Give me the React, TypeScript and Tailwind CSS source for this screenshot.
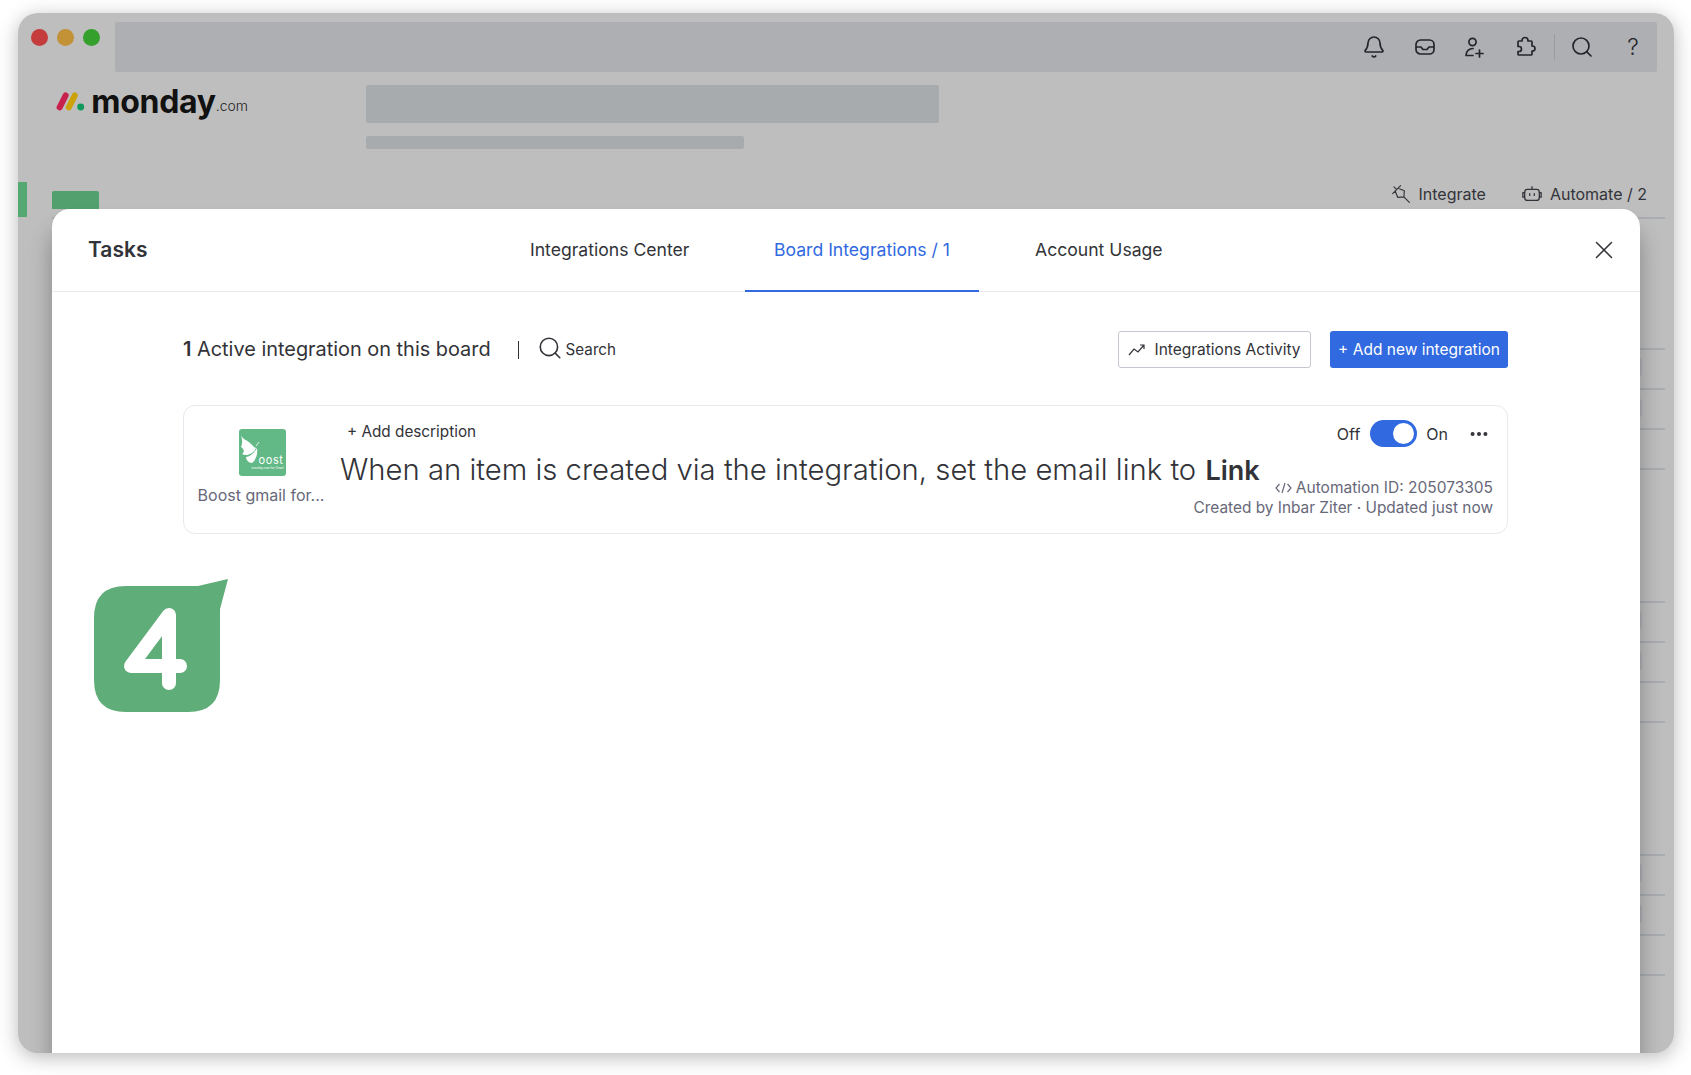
import { Bell, Search, X, Ellipsis } from "lucide-react";

const groups = [0, 1, 2];

const BoardGroup = () => {
  return (
    <div className="mb-[93px]">
      <div className="h-[40px] border-t-2 border-[#a9acb0] flex justify-end pr-[23px] pt-[8px]">
        <div className="w-[10px] h-[18px] rounded-[2px] bg-[#afb1b6]" />
      </div>
      <div className="h-[40px] border-t-2 border-[#a9acb0] flex justify-end pr-[23px] pt-[9px]">
        <div className="w-[10px] h-[18px] rounded-[2px] bg-[#afb1b6]" />
      </div>
      <div className="h-[40px] border-t-2 border-[#a9acb0]" />
      <div className="h-[40px] border-t-2 border-[#a9acb0]" />
    </div>
  );
};

const MondayLogo = () => {
  return (
    <div className="flex items-end w-[192px] h-[32px]">
      <svg width="32" height="22" viewBox="0 0 32 22" className="mb-[5px]">
        <line x1="4" y1="18" x2="10.5" y2="5" stroke="#c8204c" strokeWidth="6.6" strokeLinecap="round" />
        <line x1="14" y1="18" x2="20.5" y2="5" stroke="#cca20a" strokeWidth="6.6" strokeLinecap="round" />
        <circle cx="27" cy="17.5" r="3.8" fill="#0e9a5c" />
      </svg>
      <span className="ml-[6px] mb-[-1px] font-['Inter',sans-serif] text-[32px] leading-[32px] font-bold tracking-[-0.3px] text-[#111111]">monday</span>
      <span className="mb-[0px] font-['Inter',sans-serif] text-[14px] leading-[22px] font-light text-[#222222]">.com</span>
    </div>
  );
};

const BoostLogo = () => {
  return (
    <div className="w-[47px] h-[47px] rounded-[3px] bg-[#62b985] flex flex-col items-end justify-end pr-[2px] pb-[5px] relative overflow-hidden">
      <svg width="24" height="32" viewBox="0 0 24 32" className="absolute left-0 top-[5px]">
        <path d="M2 1 C3 5 8 6 11 9 C14 12 16 14 17 14 C15 19 8 23 3 20 C6 18 5 15 2 13 C4 9 3 5 2 1 Z" fill="#ffffff" />
        <path d="M18 14 C19 20 17 26 13 29 C10 29 7 26 7 23 C11 23 15 19 18 14 Z" fill="#ffffff" />
        <path d="M17 12 L20 8" stroke="#ffffff" strokeWidth="0.8" />
      </svg>
      <span className="font-['Inter',sans-serif] text-[11px] leading-[10px] text-white tracking-[0.6px]">oost</span>
      <span className="mt-[1px] font-['Inter',sans-serif] text-[3px] leading-[5px] text-white whitespace-nowrap">monday.com for Gmail</span>
    </div>
  );
};

const StepBadge = () => {
  return (
    <div className="absolute left-[76px] top-[565px] w-[136px] h-[136px]">
      <svg width="136" height="136" viewBox="0 0 136 136">
        <path d="M32 8 H104 L134 1 L126 31 V102 Q126 134 94 134 H32 Q0 134 0 102 V40 Q0 8 32 8 Z" fill="#5fad78" />
        <path d="M75 105 V37 L37 88 H86" fill="none" stroke="#ffffff" strokeWidth="14" strokeLinecap="round" strokeLinejoin="round" />
      </svg>
    </div>
  );
};

const Toggle = () => {
  return (
    <div className="w-[47px] h-[27px] rounded-full bg-[#3069e0] flex items-center justify-end pr-[3px]">
      <div className="w-[21px] h-[21px] rounded-full bg-white" />
    </div>
  );
};

const InboxIcon = () => (
  <svg width="24" height="24" viewBox="0 0 24 24" fill="none" stroke="currentColor" strokeWidth="1.7" strokeLinejoin="round" className="mr-[25px]">
    <rect x="3" y="5" width="18" height="14" rx="4.5" />
    <path d="M3 12 H8 L10 14.5 H14 L16 12 H21" />
  </svg>
);

const UserAddIcon = () => (
  <svg width="24" height="24" viewBox="0 0 24 24" fill="none" stroke="currentColor" strokeWidth="1.7" strokeLinecap="round" strokeLinejoin="round" className="mr-[27px]">
    <circle cx="10.5" cy="7" r="3.6" />
    <path d="M11 13.5 C7 13.5 4 16 4 20.5 H11" />
    <path d="M17.5 15 V22 M14 18.5 H21" />
  </svg>
);

const PuzzleIcon = () => (
  <svg width="24" height="24" viewBox="0 0 24 24" fill="none" stroke="currentColor" strokeWidth="1.7" strokeLinejoin="round" className="mr-[17px]">
    <path d="M9 6 V5.5 a3 3 0 0 1 6 0 V6 h3 a1 1 0 0 1 1 1 v4 h0.5 a2.5 2.5 0 0 1 0 5 H19 v3 a1 1 0 0 1 -1 1 H6 a1 1 0 0 1 -1 -1 v-2.5 h1 a2.5 2.5 0 0 0 0 -5 H5 V7 a1 1 0 0 1 1 -1 Z" />
  </svg>
);

const PlugIcon = () => (
  <svg width="20" height="20" viewBox="0 0 24 24" fill="none" stroke="currentColor" strokeWidth="1.4" strokeLinecap="round" strokeLinejoin="round" className="mr-[8px]">
    <path d="M2 11.5 L11.5 2 M5 8.5 L8 16 L15.5 15.5 L16 8 L8.5 5 M15.5 15.5 L22 22 M3.5 3.5 L6.5 6.5" />
  </svg>
);

const BotIcon = () => (
  <svg width="22" height="22" viewBox="0 0 24 24" fill="none" stroke="currentColor" strokeWidth="1.4" strokeLinecap="round" strokeLinejoin="round" className="ml-[35px] mr-[7px]">
    <rect x="4" y="7" width="16" height="12" rx="3" />
    <path d="M4 10.5 H2 V15.5 H4 M20 10.5 H22 V15.5 H20 M12 7 V4 M9.5 11.5 V13.5 M14.5 11.5 V13.5" />
  </svg>
);

export default function App() {
  return (
    <div className="w-[1691px] h-[1075px] bg-white pt-[13px] pl-[18px] font-['Inter',sans-serif]">
      <div className="relative w-[1656px] h-[1040px] rounded-[20px] bg-[#bebebe] overflow-hidden shadow-[0_4px_20px_rgba(0,0,0,0.28)]">
        {/* Blurred board behind the modal */}
        <div className="flex items-start h-[50px] mt-[9px]">
          <div className="flex items-center gap-[9px] w-[97px] pl-[13px] shrink-0 mt-[7px]">
            <div className="w-[17px] h-[17px] rounded-full bg-[#c43c3c] shrink-0" />
            <div className="w-[17px] h-[17px] rounded-full bg-[#c39136] shrink-0" />
            <div className="w-[17px] h-[17px] rounded-full bg-[#35a02c] shrink-0" />
          </div>
          <div className="flex-1 mr-[17px] h-full rounded-[2px] bg-[#aeafb3] flex items-center justify-end pr-[12px] text-[#24252b]">
            <Bell className="w-[24px] h-[24px] mr-[27px]" strokeWidth={1.7} />
            <InboxIcon />
            <UserAddIcon />
            <PuzzleIcon />
            <div className="w-px h-[26px] bg-[#9c9da1] mr-[15px]" />
            <Search className="w-[24px] h-[24px] mr-[27px]" strokeWidth={1.7} />
            <span className="w-[24px] text-center text-[23px] leading-[24px] font-light">?</span>
          </div>
        </div>

        <div className="flex items-start mt-[13px] pl-[38px]">
          <div className="w-[310px]">
            <MondayLogo />
          </div>
          <div>
            <div className="w-[573px] h-[38px] rounded-[2px] bg-[#a8abae]" />
            <div className="w-[378px] h-[13px] mt-[13px] rounded-[2px] bg-[#a8abae]" />
          </div>
        </div>

        <div className="flex items-start mt-[33px]">
          <div className="w-[9px] h-[35px] bg-[#55a871]" />
          <div className="w-[47px] h-[18px] ml-[25px] mt-[9px] rounded-t-[2px] bg-[#52a06e]" />
          <div className="flex-1 flex justify-end items-center pr-[27px] h-[24px] text-[16px] text-[#33343a]">
            <PlugIcon />
            <span>Integrate</span>
            <BotIcon />
            <span>Automate / 2</span>
          </div>
        </div>

        <div className="ml-[34px] mr-[9px]">
          <div className="h-[131px] border-t-2 border-[#a9acb0]" />
          {groups.map((group) => (
            <BoardGroup key={group} />
          ))}
        </div>

        {/* Modal */}
        <div className="absolute left-[34px] right-[34px] top-[196px] bottom-0 rounded-t-[18px] bg-white shadow-[0_20px_22px_rgba(0,0,0,0.3)]">
          <div className="relative flex items-center h-[83px] border-b border-[#e8e9ee] pl-[36px]">
            <span className="text-[21px] font-semibold text-[#323338] w-[442px]">Tasks</span>
            <div className="flex items-center h-full text-[17.6px] text-[#323338]">
              <div className="flex items-center h-full w-[215px]">Integrations Center</div>
              <div className="flex items-center h-full w-[234px] justify-center pt-[2px] border-b-2 border-[#3069e0] text-[#3069e0] mb-[-1px]">
                Board Integrations / 1
              </div>
              <div className="flex items-center h-full ml-[56px]">Account Usage</div>
            </div>
            <X className="absolute right-[21px] top-[26px] w-[30px] h-[30px] text-[#323338]" strokeWidth={1.2} />
          </div>

          <div className="pl-[131px] pr-[132px]">
            <div className="flex items-center h-[37px] mt-[39px]">
              <span className="text-[19.9px] text-[#323338]">
                <span className="font-semibold">1</span> Active integration on this board
              </span>
              <div className="w-px h-[18px] bg-[#323338] ml-[27px]" />
              <Search className="w-[26px] h-[26px] ml-[18px] mt-[-3px] text-[#323338]" strokeWidth={1.5} />
              <span className="ml-[3px] pt-[2px] text-[15.2px] text-[#323338]">Search</span>
              <div className="ml-auto flex items-center h-[37px] w-[193px] pt-[1px] rounded-[3px] border border-[#c5c7d0] justify-center text-[15.5px] text-[#323338]">
                <svg width="18" height="14" viewBox="0 0 18 14" fill="none" stroke="#323338" strokeWidth="1.2" className="mr-[8px]">
                  <path d="M1 12 L6 6 L10 9 L16 2 M12 2 H16 V6" />
                </svg>
                Integrations Activity
              </div>
              <div className="ml-[19px] flex items-center justify-center h-[37px] w-[178px] pt-[1px] rounded-[3px] bg-[#3069e0] text-[15.5px] text-white">
                + Add new integration
              </div>
            </div>

            <div className="relative flex mt-[37px] h-[129px] rounded-[12px] border border-[#e8e9ee]">
              <div className="w-[156px] pt-[23px] flex flex-col items-center shrink-0">
                <BoostLogo />
                <span className="mt-[10px] ml-[-2px] text-[16px] leading-[19px] text-[#676879] whitespace-nowrap">Boost gmail for...</span>
              </div>
              <div className="flex-1">
                <div className="ml-[7px] mt-[16px] text-[15.3px] leading-[20px] text-[#323338]">+ Add description</div>
                <div className="mt-[9px] text-[29.25px] leading-[38px] font-light text-[#323338] whitespace-nowrap">
                  When an item is created via the integration, set the email link to <span className="font-semibold text-[27px] ml-[1px]">Link</span>
                </div>
              </div>
              <div className="absolute right-[14px] top-[14px] flex flex-col items-end">
                <div className="flex items-center h-[27px] text-[16px] text-[#323338]">
                  <span className="mr-[10px]">Off</span>
                  <Toggle />
                  <span className="ml-[9px]">On</span>
                  <Ellipsis className="w-[22px] h-[22px] ml-[20px] mr-[3px]" strokeWidth={2.4} />
                </div>
                <div className="flex items-center mt-[30px] text-[15.5px] leading-[21px] text-[#676879] whitespace-nowrap">
                  <svg width="17" height="12" viewBox="0 0 17 12" fill="none" stroke="#676879" strokeWidth="1.2" className="mr-[4px]">
                    <path d="M4.5 2 L1 6 L4.5 10 M12.5 2 L16 6 L12.5 10 M10 1 L7 11" />
                  </svg>
                  Automation ID: 205073305
                </div>
                <div className="text-[15.4px] leading-[20px] text-[#676879] whitespace-nowrap">Created by Inbar Ziter · Updated just now</div>
              </div>
            </div>
          </div>
        </div>

        <StepBadge />
      </div>
    </div>
  );
}
